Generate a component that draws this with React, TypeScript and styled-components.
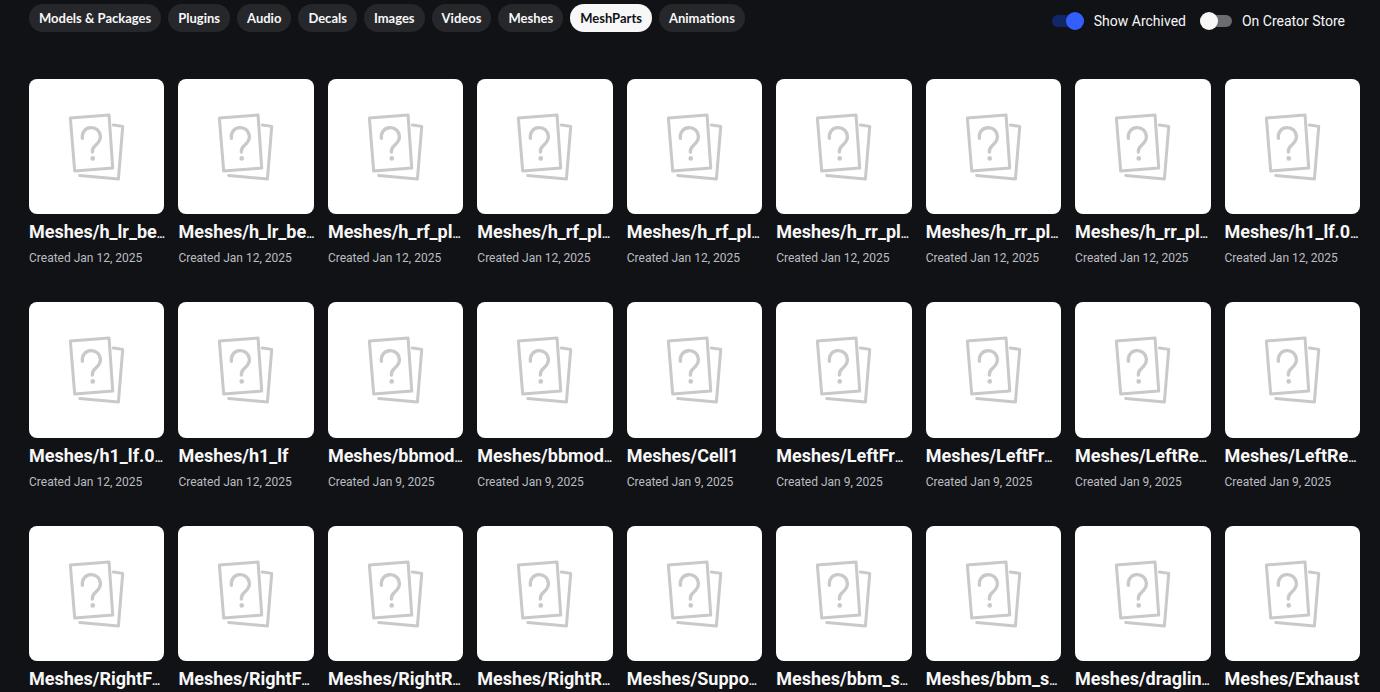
import React, { useState } from "react";
import styled, { createGlobalStyle } from "styled-components";

const GlobalStyle = createGlobalStyle`
  *, *::before, *::after { box-sizing: border-box; }
  html { overflow: hidden; }
  body {
    margin: 0;
    background: #111216;
    color: #f7f7f8;
    font-family: Roboto, "Liberation Sans", sans-serif;
  }
`;

const Page = styled.main`
  padding: 4px 20px 0 29px;
`;

const Toolbar = styled.header`
  display: flex;
  justify-content: space-between;
  align-items: flex-start;
  padding-right: 15px;
  margin-bottom: 46px;
`;

const Chips = styled.nav`
  display: flex;
  gap: 7px;
`;

const Chip = styled.button<{ $active: boolean }>`
  height: 28px;
  padding: 0 10px;
  border: 0;
  border-radius: 14px;
  background: ${(p) => (p.$active ? "#f7f7f8" : "#26272b")};
  color: ${(p) => (p.$active ? "#111216" : "#f7f7f8")};
  font: 700 13px/28px Lato, "Liberation Sans", sans-serif;
  white-space: nowrap;
  cursor: pointer;
`;

const Toggles = styled.div`
  display: flex;
  gap: 14px;
  padding-top: 5px;
`;

const ToggleLabel = styled.label`
  display: flex;
  align-items: center;
  gap: 10px;
  height: 24px;
  font-size: 14px;
  line-height: 24px;
  white-space: nowrap;
  cursor: pointer;
`;

const Switch = styled.input`
  appearance: none;
  display: flex;
  align-items: center;
  width: 32px;
  height: 12px;
  margin: 0;
  border-radius: 6px;
  background: #6b6c70;
  cursor: pointer;

  &::before {
    content: "";
    width: 18px;
    height: 18px;
    flex: none;
    border-radius: 50%;
    background: #f7f7f8;
  }

  &:checked {
    justify-content: flex-end;
    background: #122768;
  }

  &:checked::before {
    background: #335fff;
  }
`;

const Grid = styled.ul`
  display: grid;
  grid-template-columns: repeat(9, minmax(0, 1fr));
  gap: 32px 14px;
  margin: 0;
  padding: 0;
  list-style: none;
`;

const Thumb = styled.div`
  aspect-ratio: 1;
  border-radius: 8px;
  background: #fff;

  svg {
    display: block;
    width: 100%;
    height: 100%;
  }
`;

const Title = styled.h2`
  margin: 4px 0 0;
  font-size: 18px;
  font-weight: 700;
  line-height: 28px;
  white-space: nowrap;
`;

const Ellipsis = styled.span`
  font-size: 11px;
  line-height: 1;
`;

const Created = styled.p`
  margin: 4px 0 0;
  color: #bcbdc1;
  font-size: 12px;
  line-height: 16px;
  padding-bottom: 4px;
  white-space: nowrap;
`;

const categories = [
  "Models & Packages", "Plugins", "Audio", "Decals", "Images",
  "Videos", "Meshes", "MeshParts", "Animations",
];

type Asset = { name: string; date: string; cut?: boolean };

const asset = (name: string, date: string, cut = true): Asset => ({ name, date, cut });

const assets: Asset[] = [
  asset("h_lr_be", "Jan 12, 2025"),
  asset("h_lr_be", "Jan 12, 2025"),
  asset("h_rf_pl", "Jan 12, 2025"),
  asset("h_rf_pl", "Jan 12, 2025"),
  asset("h_rf_pl", "Jan 12, 2025"),
  asset("h_rr_pl", "Jan 12, 2025"),
  asset("h_rr_pl", "Jan 12, 2025"),
  asset("h_rr_pl", "Jan 12, 2025"),
  asset("h1_lf.0", "Jan 12, 2025"),
  asset("h1_lf.0", "Jan 12, 2025"),
  asset("h1_lf", "Jan 12, 2025", false),
  asset("bbmod", "Jan 9, 2025"),
  asset("bbmod", "Jan 9, 2025"),
  asset("Cell1", "Jan 9, 2025", false),
  asset("LeftFr", "Jan 9, 2025"),
  asset("LeftFr", "Jan 9, 2025"),
  asset("LeftRe", "Jan 9, 2025"),
  asset("LeftRe", "Jan 9, 2025"),
  asset("RightF", "Jan 9, 2025"),
  asset("RightF", "Jan 9, 2025"),
  asset("RightR", "Jan 9, 2025"),
  asset("RightR", "Jan 9, 2025"),
  asset("Suppo", "Jan 9, 2025"),
  asset("bbm_s", "Jan 9, 2025"),
  asset("bbm_s", "Jan 9, 2025"),
  asset("draglin", "Jan 9, 2025"),
  asset("Exhaust", "Jan 9, 2025", false),
];

const MissingPreview = () => (
  <svg viewBox="-91 -78 406 406" fill="none" stroke="#c9c9c9" strokeWidth="9" aria-hidden="true">
    <path d="M33 39 149 30 160 189 46 198Z" strokeLinejoin="round" />
    <path d="M162 60 190 64 177 222 61 211" strokeLinecap="round" strokeLinejoin="round" />
    <path d="M69 100C67 82 77 69 94 68C111 67 122 79 123 93C124 107 116 114 108 121C101 127 98 132 99 141" strokeWidth="10" strokeLinecap="round" />
    <circle cx="100" cy="160" r="7" fill="#c9c9c9" stroke="none" />
  </svg>
);

export default function App() {
  const [category, setCategory] = useState("MeshParts");
  return (
    <>
      <GlobalStyle />
      <Page>
        <Toolbar>
          <Chips aria-label="Asset type">
            {categories.map((name) => (
              <Chip
                key={name}
                type="button"
                $active={name === category}
                aria-pressed={name === category}
                onClick={() => setCategory(name)}
              >
                {name}
              </Chip>
            ))}
          </Chips>
          <Toggles>
            <ToggleLabel>
              <Switch type="checkbox" role="switch" defaultChecked />
              Show Archived
            </ToggleLabel>
            <ToggleLabel>
              <Switch type="checkbox" role="switch" />
              On Creator Store
            </ToggleLabel>
          </Toggles>
        </Toolbar>
        <Grid>
          {assets.map(({ name, date, cut }, i) => (
            <li key={i}>
              <Thumb><MissingPreview /></Thumb>
              <Title>Meshes/{name}{cut && <Ellipsis>…</Ellipsis>}</Title>
              <Created>Created {date}</Created>
            </li>
          ))}
        </Grid>
      </Page>
    </>
  );
}
